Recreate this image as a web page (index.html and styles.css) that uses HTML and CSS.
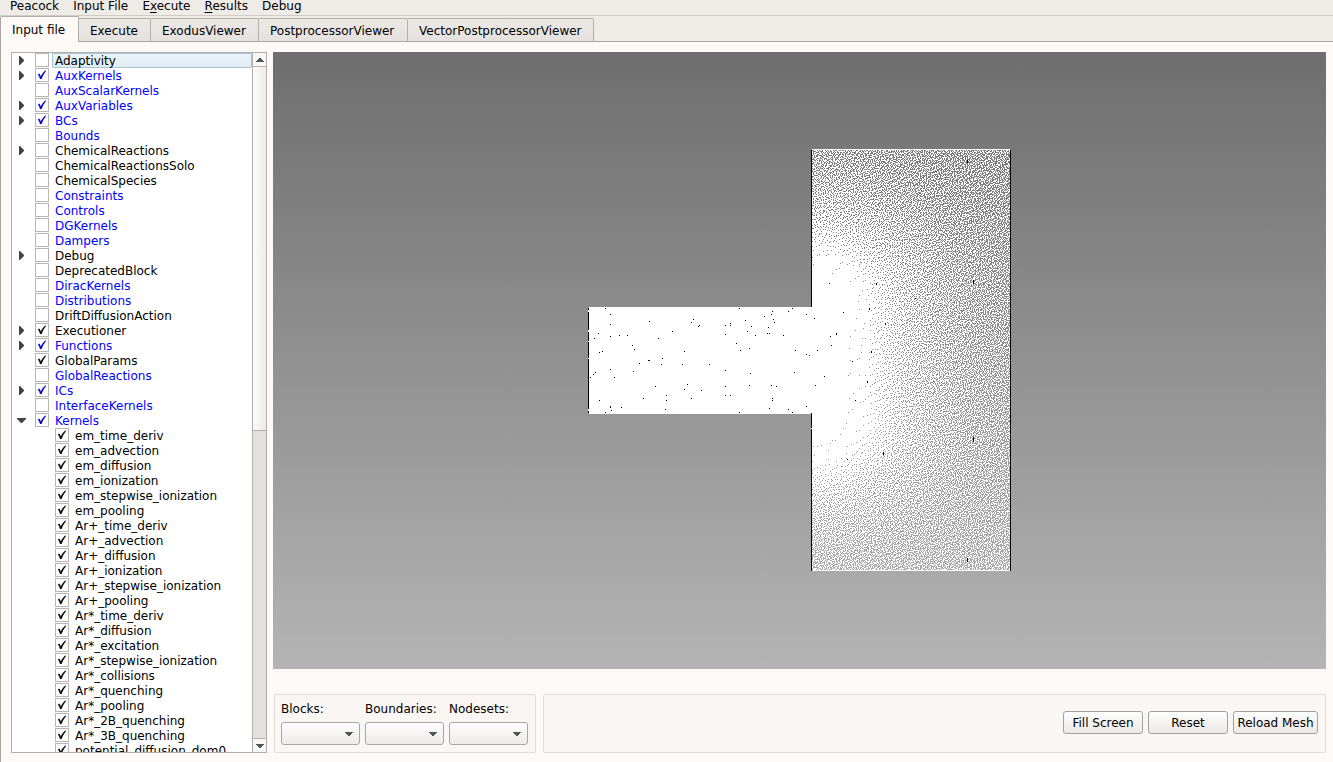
FILE: index.html
```html
<!DOCTYPE html>
<html lang="en">
<head>
<meta charset="utf-8">
<title>Peacock</title>
<link rel="stylesheet" href="styles.css">
</head>
<body>
<div class="app">
  <nav class="menubar">
    <span>Peacock</span><span>Input File</span><span>E<u>x</u>ecute</span><span><u>R</u>esults</span><span>Debug</span>
  </nav>
  <div class="tabs">
    <div class="tab active">Input file</div>
    <div class="tab t-exec">Execute</div>
    <div class="tab t-exo">ExodusViewer</div>
    <div class="tab t-post">PostprocessorViewer</div>
    <div class="tab t-vec">VectorPostprocessorViewer</div>
  </div>
  <main class="pane">
    <section class="treebox">
      <div class="tree" id="tree"></div>
      <div class="scrollbar">
        <div class="sbtn up"><svg width="8" height="4" viewBox="0 0 8 4"><path d="M3 0h2v1h1v1h1v1h1v1H0V3h1V2h1V1h1z" fill="#555"/></svg></div>
        <div class="thumb"></div>
        <div class="trough"></div>
        <div class="sbtn down"><svg width="8" height="4" viewBox="0 0 8 4"><path d="M0 0h8v1H7v1H6v1H5v1H3V3H2V2H1V1H0z" fill="#555"/></svg></div>
      </div>
    </section>
    <section class="viewer">
      <div class="viewport"><canvas id="mesh" width="1053" height="617"></canvas></div>
      <div class="controls">
        <div class="group selectors">
          <div class="field"><label>Blocks:</label><div class="combo"><svg width="8" height="4" viewBox="0 0 8 4"><path d="M0 0h8v1H7v1H6v1H5v1H3V3H2V2H1V1H0z" fill="#555"/></svg></div></div>
          <div class="field"><label>Boundaries:</label><div class="combo"><svg width="8" height="4" viewBox="0 0 8 4"><path d="M0 0h8v1H7v1H6v1H5v1H3V3H2V2H1V1H0z" fill="#555"/></svg></div></div>
          <div class="field"><label>Nodesets:</label><div class="combo"><svg width="8" height="4" viewBox="0 0 8 4"><path d="M0 0h8v1H7v1H6v1H5v1H3V3H2V2H1V1H0z" fill="#555"/></svg></div></div>
        </div>
        <div class="group actions">
          <button class="btn">Fill Screen</button><button class="btn">Reset</button><button class="btn wide">Reload Mesh</button>
        </div>
      </div>
    </section>
  </main>
</div>
<script src="app.js"></script>
</body>
</html>
```
FILE: styles.css
```css
* { box-sizing: border-box; }
body {
  margin: 0;
  width: 1333px;
  height: 762px;
  overflow: hidden;
  background: #efebe7;
  color: #000;
  font: 12px/15px "DejaVu Sans", sans-serif;
}
.app { display: flex; flex-direction: column; height: 762px; }
.menubar {
  display: flex;
  gap: 14.2px;
  height: 16px;
  padding: 0 10px;
  border-bottom: 1px solid #d0ccc8;
  line-height: 13px;
  white-space: nowrap;
}
.menubar u { text-underline-offset: 2px; text-decoration-skip-ink: none; }
.tabs {
  display: flex;
  align-items: flex-end;
  height: 26px;
  border-bottom: 1px solid #aaa6a3;
}
.tab {
  height: 23px;
  padding: 5px 0 0 11px;
  border: 1px solid #b3afac;
  border-left: 0;
  border-bottom: 0;
  border-radius: 0 2px 0 0;
  background: linear-gradient(#ebe8e5, #e5e1de);
  white-space: nowrap;
}
.tab.active {
  width: 79px;
  height: 26px;
  margin-bottom: -1px;
  padding: 6px 0 0 11px;
  border-left: 1px solid #aaa6a3;
  border-radius: 2px 2px 0 0;
  background: #fdf9f6;
}
.t-exec { width: 72px; }
.t-exo { width: 108px; }
.t-post { width: 149px; }
.t-vec { width: 186px; }
.pane {
  display: flex;
  flex: 1;
  gap: 6px;
  min-height: 0;
  padding: 10px 7px 9px 10px;
  border-left: 1px solid #aaa6a3;
  background: #fdf9f6;
}
.treebox {
  display: flex;
  width: 256px;
  border: 1px solid #b2aeab;
  background: #fff;
}
.tree { flex: 1; overflow: hidden; }
.row { display: flex; height: 15px; white-space: nowrap; }
.arrow { display: flex; align-items: center; width: 23px; padding-left: 7px; }
.nested .arrow { width: 43px; }
.check { width: 14px; height: 14px; border: 1px solid #b9b5b2; background: #fff; }
.check svg { display: block; }
.label { flex: 1; margin-left: 3px; padding-left: 3px; line-height: 17px; }
.current .label {
  padding-left: 2px;
  border: 1px solid #a9c5d6;
  border-radius: 1px;
  background: linear-gradient(#e9f5fb, #e1edf3);
  line-height: 15px;
}
.blue { color: #00f; }
.scrollbar {
  display: flex;
  flex-direction: column;
  width: 14px;
  border-left: 1px solid #b2aeab;
}
.sbtn { display: flex; align-items: center; justify-content: center; height: 14px; background: #f8f7f6; }
.up { border-bottom: 1px solid #b9b5b2; padding-top: 1px; }
.down { border-top: 1px solid #b9b5b2; }
.thumb { height: 364px; border-bottom: 1px solid #b2aeab; background: linear-gradient(90deg, #fbfbfa, #edebe9); }
.trough { flex: 1; background: #e3e1de; }
.viewer { display: flex; flex: 1; flex-direction: column; }
.viewport { height: 617px; background: linear-gradient(#6e6e6e, #b4b4b4); }
.viewport canvas { display: block; }
.controls { display: flex; gap: 7px; height: 59px; margin: 25px 0 0 1px; }
.group { display: flex; border: 1px solid #e0dcd9; border-radius: 2px; background: #faf6f3; }
.selectors { gap: 5px; width: 262px; padding: 7px 6px 6px; }
.field { width: 79px; }
.field label { display: block; }
.combo {
  display: flex;
  align-items: center;
  justify-content: flex-end;
  height: 23px;
  margin-top: 5px;
  padding: 1px 6px 0 0;
  border: 1px solid #aaa6a3;
  border-radius: 3px;
  background: linear-gradient(#fefefe, #edebe9);
}
.actions { flex: 1; align-items: center; justify-content: flex-end; gap: 5px; padding-right: 7px; }
.btn {
  width: 80px;
  height: 23px;
  margin-bottom: 2px;
  padding: 2px 0 0;
  border: 1px solid #a5a19e;
  border-radius: 3px;
  background: linear-gradient(#fefefe, #ebe9e7);
  color: #000;
  font: inherit;
}
.wide { width: 85px; }
```
FILE: app.js
```js
// Each entry: flags + name. ">" collapsed, "v" expanded, "x" checked, "b" blue, "n" nested, "c" current.
const rows = `>c Adaptivity
>xb AuxKernels
b AuxScalarKernels
>xb AuxVariables
>xb BCs
b Bounds
> ChemicalReactions
- ChemicalReactionsSolo
- ChemicalSpecies
b Constraints
b Controls
b DGKernels
b Dampers
> Debug
- DeprecatedBlock
b DiracKernels
b Distributions
- DriftDiffusionAction
>x Executioner
>xb Functions
x GlobalParams
b GlobalReactions
>xb ICs
b InterfaceKernels
vxb Kernels
nx em_time_deriv
nx em_advection
nx em_diffusion
nx em_ionization
nx em_stepwise_ionization
nx em_pooling
nx Ar+_time_deriv
nx Ar+_advection
nx Ar+_diffusion
nx Ar+_ionization
nx Ar+_stepwise_ionization
nx Ar+_pooling
nx Ar*_time_deriv
nx Ar*_diffusion
nx Ar*_excitation
nx Ar*_stepwise_ionization
nx Ar*_collisions
nx Ar*_quenching
nx Ar*_pooling
nx Ar*_2B_quenching
nx Ar*_3B_quenching
nx potential_diffusion_dom0`.split("\n");

document.getElementById("tree").innerHTML = rows.map(line => {
  const [flags, name] = line.split(" ");
  const has = f => flags.includes(f);
  const arrow = has(">") ? '<svg width="5" height="9" viewBox="0 0 5 9"><path d="M0 0h1l4 4v1L1 9H0z" fill="#444"/></svg>'
    : has("v") ? '<svg style="margin-left:-2px" width="9" height="5" viewBox="0 0 9 5"><path d="M0 0h9v1L5 5H4L0 1z" fill="#444"/></svg>' : "";
  const color = has("b") ? "#0000c8" : "#000";
  const tick = has("x") ? `<svg width="12" height="12" viewBox="0 0 12 12"><path d="M2 5.2L3.5 4.8L4.7 7.4Q6.6 4 9.3 1.6L9.9 2Q7 5.8 5.4 10H4.1Q3.4 7.4 2 5.2z" fill="${color}" stroke="${color}" stroke-width=".2"/></svg>` : "";
  return `<div class="row${has("n") ? " nested" : ""}${has("c") ? " current" : ""}"><span class="arrow">${arrow}</span><span class="check">${tick}</span><span class="label${has("b") ? " blue" : ""}">${name}</span></div>`;
}).join("");

// Mesh view: canvas origin sits at window position (273, 52).
const ctx = document.getElementById("mesh").getContext("2d");
const OX = 273, OY = 52;
const rect = (x, y, w, h, c) => { ctx.fillStyle = c; ctx.fillRect(x - OX, y - OY, w, h); };
rect(589, 307, 223, 107, "#fff");
rect(812, 149, 198, 422, "#fff");

let seed = 12345;
const rnd = () => (seed = (seed * 1664525 + 1013904223) >>> 0) / 4294967296;
const stops = [[36, 0], [56, .02], [72, .12], [95, .25], [125, .37], [160, .48], [200, .54], [280, .58]];
const density = (x, y) => {
  const dy = Math.max(307 - y, (y - 413) * 1.1, 0);
  const d = Math.hypot(x - 811, dy);
  if (d <= 36) return 0;
  for (let i = 1; i < stops.length; i++) {
    if (d < stops[i][0]) {
      const [a, p] = stops[i - 1], [b, q] = stops[i];
      return p + (q - p) * (d - a) / (b - a);
    }
  }
  return .58;
};
// Gaps between element edges, spread by error diffusion.
const W = 198;
let err = new Float32Array(W + 2);
for (let y = 150; y < 570; y++) {
  const next = new Float32Array(W + 2);
  for (let i = 0; i < W; i++) {
    const p = density(812 + i, y);
    const v = p + err[i + 1];
    const on = p > 0 && v > .5 + (rnd() - .5) * 1.3;
    const e = v - (on ? 1 : 0);
    if (on) ctx.clearRect(812 + i - OX, y - OY, 1, 1);
    err[i + 2] += e * 7 / 16;
    next[i] += e * 3 / 16;
    next[i + 1] += e * 5 / 16;
    next[i + 2] += e / 16;
  }
  err = next;
}

// Domain boundary
rect(811, 150, 1, 157, "#000");
rect(811, 413, 1, 158, "#000");
rect(811, 428, 1, 1, "#fff");
rect(1010, 150, 1, 421, "#000");
[[308, 2], [312, 18], [332, 9], [342, 16], [359, 50], [411, 2]].forEach(([y, h]) => rect(588, y, 1, h, "#000"));
[[310, 2], [330, 2], [341, 1], [358, 1], [409, 2]].forEach(([y, h]) => rect(588, y, 1, h, "#fff"));

// Nodes left visible inside the dense region
const dots = [605,308,610,314,610,324,598,333,594,338,610,336,619,335,627,335,649,321,632,345,634,349,599,352,602,351,
  658,338,672,331,691,322,693,319,698,326,699,325,684,351,662,358,648,360,649,360,661,364,639,363,682,364,709,364,
  610,369,633,371,595,372,593,374,590,377,614,377,655,386,687,384,684,389,701,390,666,395,666,400,643,398,691,398,
  599,400,610,406,610,407,611,410,621,407,605,412,665,409,739,308,772,311,771,314,792,308,788,311,806,314,764,316,
  773,319,774,322,745,320,725,325,730,323,730,325,725,334,751,326,747,331,768,327,767,333,769,333,755,335,783,335,
  736,343,740,350,749,348,795,350,806,354,809,355,725,370,794,372,750,373,725,386,749,385,771,385,776,386,
  725,395,730,395,772,398,772,400,769,408,788,409,792,412,806,406,739,412,814,318,817,350,815,385,
  829,283,843,312,830,336,831,345,852,361,824,376,915,298,855,400];
for (let i = 0; i < dots.length; i += 2) rect(dots[i], dots[i + 1], 1, 1, "#000");
[[967,160,3],[973,280,4],[876,283,2],[869,308,2],[885,323,2],[836,333,2],[871,351,2],[867,381,2],[883,452,3],[973,437,5],[967,558,4]]
  .forEach(([x, y, h]) => rect(x, y, 1, h, "#000"));
rect(847, 459, 1, 1, "#000");
```
